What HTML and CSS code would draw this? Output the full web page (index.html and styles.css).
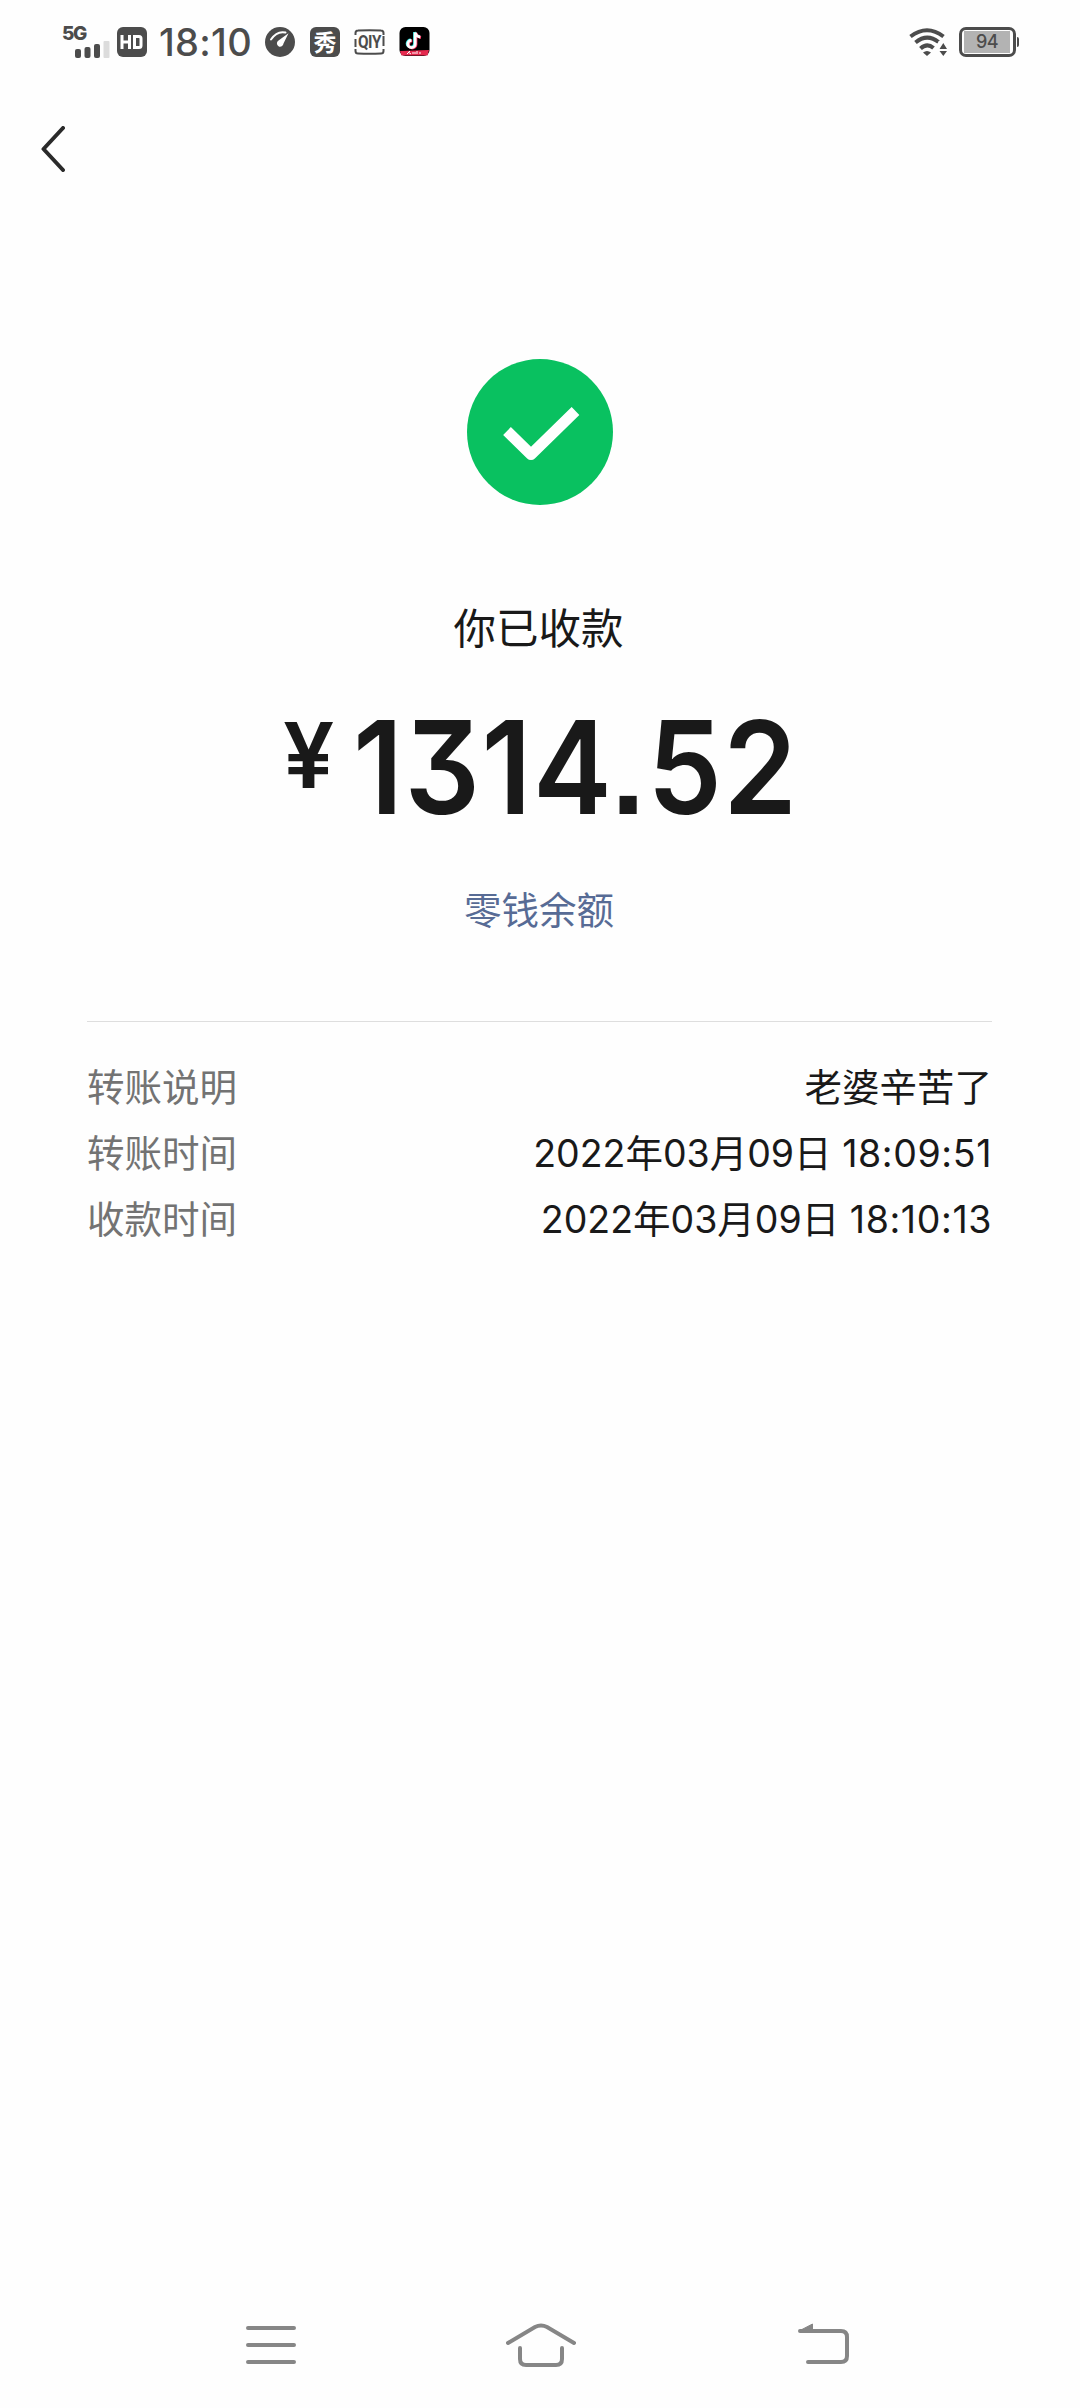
FILE: index.html
```html
<!DOCTYPE html>
<html lang="zh-CN">
<head>
<meta charset="utf-8">
<title>你已收款</title>
<link rel="stylesheet" href="styles.css">
</head>
<body>
<div class="screen">
  <header class="status">
    <div class="status-left">
      <div class="signal">
        <span class="network">5G</span>
        <svg class="bars" width="36" height="17" viewBox="0 0 36 17"><g fill="#4c4c4c"><rect x="0" y="8" width="6" height="9" rx="2"/><rect x="9.5" y="6" width="6" height="11" rx="2"/><rect x="19" y="3" width="6" height="14" rx="2"/></g><rect x="28.500" y="0" width="6" height="17" rx="1" fill="#dcdcdc"/></svg>
      </div>
      <svg class="hd" width="30" height="30" viewBox="0 0 30 30"><rect width="30" height="30" rx="6" fill="#4c4c4c"/><path d="M5 8v14M12.500 8v14M5 15h7.500M17.500 9.500h4.500q2 0 2 2v7q0 2-2 2h-4.500z" fill="none" stroke="#fff" stroke-width="3"/></svg>
      <span class="clock">18:10</span>
      <svg class="gauge" width="30" height="30" viewBox="0 0 30 30"><circle cx="15" cy="15" r="15" fill="#4c4c4c"/><path d="M6 12.500Q12 3.500 20.500 5.500" fill="none" stroke="#fff" stroke-width="2" stroke-linecap="round"/><path d="M23.500 6.200L18.500 16.500A3.300 3.300 0 1 1 13.500 13.500Z" fill="#fff"/></svg>
      <span class="show">秀</span>
      <span class="iqiyi"><svg width="31" height="26" viewBox="0 0 31 26"><path d="M1.500 6V4Q1.500 1.500 4 1.500Q15.500.8 27 1.500Q29.500 1.500 29.500 4V6M1.500 20v2Q1.500 24.500 4 24.500Q15.500 25.200 27 24.500Q29.500 24.500 29.500 22V20M1.500 10v8M29.500 7v10" fill="none" stroke="#4c4c4c" stroke-width="2"/></svg><b>QIY</b></span>
      <svg class="tiktok" width="31" height="30" viewBox="0 0 31 30"><rect x=".5" width="30" height="29" rx="6" fill="#000"/><g fill="none" stroke-width="2.800"><path d="M15.500 5v11.500a3.700 3.700 0 1 1-3.700-3.700M15.500 5q1 4 5 4.500" stroke="#35e8e4"/><path d="M17 6v11.500a3.700 3.700 0 1 1-3.700-3.700M17 6q1 4 5 4.500" stroke="#f8315c"/><path d="M16.200 5.500V17a3.700 3.700 0 1 1-3.700-3.700M16.200 5.500q1 4 5 4.500" stroke="#fff"/></g><path d="M1 24l29-1-1.500 5.500H2.500z" fill="#e5294e"/><path d="M8 27l3-3M9 25l3 2M13 26h4M18 24v3M20 26h2" stroke="#fff" stroke-width="1"/></svg>
    </div>
    <div class="status-right">
      <svg class="wifi" width="38" height="28" viewBox="0 0 38 28"><g fill="none" stroke="#4c4c4c" stroke-width="4"><path d="M1.500 8.500Q18 -4 34.500 8.500"/><path d="M6.500 14.500Q18 5 29.500 14"/><path d="M11.500 20.500Q18 14.500 24.500 20"/></g><path d="M14 24.500Q18 21.500 22 24.500L18 28z" fill="#4c4c4c"/><path d="M29.500 22h10V13h-10z" fill="#fefefe"/><path d="M30.500 21l3.800-6 3.700 6zM30.500 23h7.500l-3.700 5z" fill="#4c4c4c"/></svg>
      <span class="battery"><span class="level">94</span></span>
      <span class="battery-tip"></span>
    </div>
  </header>

  <nav class="topbar">
    <svg width="24" height="46" viewBox="0 0 24 46"><path d="M22 2L2.500 23L22 44" fill="none" stroke="#2a2a2a" stroke-width="4" stroke-linecap="round" stroke-linejoin="round"/></svg>
  </nav>

  <main class="receipt">
    <svg class="check" width="146" height="146" viewBox="0 0 146 146"><circle cx="73" cy="73" r="73" fill="#09c160"/><path d="M40 72L64 95.500L108.500 52" fill="none" stroke="#fff" stroke-width="11" stroke-linejoin="round"/></svg>
    <h1 class="title">你已收款</h1>
    <div class="amount"><span class="yen">¥</span><span class="number">1314.52</span></div>
    <a class="balance">零钱余额</a>
    <dl class="details">
      <div class="row"><dt>转账说明</dt><dd>老婆辛苦了</dd></div>
      <div class="row"><dt>转账时间</dt><dd>2022年03月09日 <span class="time">18:09:51</span></dd></div>
      <div class="row"><dt>收款时间</dt><dd>2022年03月09日 <span class="time">18:10:13</span></dd></div>
    </dl>
  </main>

  <footer class="navbar">
    <svg width="50" height="40" viewBox="0 0 50 40"><path d="M2 3h46M2 20h46M2 37h46" stroke="#868686" stroke-width="4" stroke-linecap="round"/></svg>
    <svg class="home" width="70" height="44" viewBox="0 0 70 44"><path d="M2 20L29 4Q35 1 41 4L68 20M14 25V36Q14 42 20 42H50Q56 42 56 36V25" fill="none" stroke="#868686" stroke-width="4" stroke-linecap="round"/></svg>
    <svg class="back" width="51" height="44" viewBox="0 0 51 44"><path d="M10 39H43Q49 39 49 33V14Q49 8 43 8H2" fill="none" stroke="#868686" stroke-width="4" stroke-linecap="round"/><path d="M1 8L14.500 1V8z" fill="#868686" stroke="#868686" stroke-linejoin="round"/></svg>
  </footer>
</div>
</body>
</html>
```
FILE: styles.css
```css
* { box-sizing: border-box; }
body, h1, dl, dd { margin: 0; }
body {
  background: #fefefe;
  color: #191919;
  font-family: Inter, "Noto Sans CJK SC", sans-serif;
}
.screen {
  width: 1080px;
  height: 2408px;
  display: flex;
  flex-direction: column;
  overflow: hidden;
}
.screen svg { display: block; flex: none; }

.status {
  height: 84px;
  padding: 0 61px 0 62px;
  display: flex;
  justify-content: space-between;
  align-items: center;
  color: #4c4c4c;
}
.status-left, .status-right { display: flex; align-items: center; }
.signal { width: 48px; height: 32px; }
.network {
  display: block;
  height: 15px;
  line-height: 15px;
  font-size: 19px;
  font-weight: 800;
  letter-spacing: -1.500px;
}
.bars { margin-left: 13px; }
.hd { margin-left: 7px; }
.clock {
  width: 94px;
  margin-left: 12px;
  font-size: 38px;
  font-weight: 500;
  letter-spacing: .3px;
  white-space: nowrap;
}
.gauge { margin-left: 12px; }
.show {
  width: 30px;
  height: 30px;
  margin-left: 15px;
  border-radius: 6px;
  background: #4c4c4c;
  color: #fff;
  font: 700 23px/29px "Noto Sans CJK SC", sans-serif;
  text-align: center;
}
.iqiyi { position: relative; margin-left: 14px; }
.iqiyi b {
  position: absolute;
  inset: 0;
  font: 700 18px/26px Roboto, sans-serif;
  letter-spacing: -.5px;
  text-align: center;
  transform: scaleX(.85);
}
.tiktok { margin-left: 14px; }
.battery {
  width: 57px;
  height: 30px;
  margin-left: 12px;
  padding: 1px 2px;
  border: 3px solid #4c4c4c;
  border-radius: 7px;
}
.level {
  display: block;
  width: 46px;
  height: 22px;
  background: #b3b3b3;
  font-size: 18px;
  line-height: 22px;
  font-weight: 500;
  letter-spacing: -.5px;
  text-align: center;
}
.battery-tip {
  width: 2px;
  height: 10px;
  margin-left: 1px;
  border-radius: 0 2px 2px 0;
  background: #4c4c4c;
}

.topbar { height: 130px; padding: 42px 41px 0; }

.receipt {
  flex: 1;
  padding: 145px 88px 0 87px;
  display: flex;
  flex-direction: column;
  align-items: center;
}
.title {
  margin: 93px 2px 0 0;
  font-size: 42.500px;
  line-height: 62px;
  font-weight: 400;
}
.amount {
  display: flex;
  align-items: flex-start;
  align-self: flex-start;
  margin: 28px 0 0 196px;
  height: 159px;
}
.yen { width: 70px; font-size: 91px; line-height: 134px; font-weight: 600; }
.number {
  font-size: 129.500px;
  line-height: 158px;
  font-weight: 560;
  letter-spacing: 1.600px;
  font-feature-settings: "cv09", "ss07";
  transform: scaleX(.914);
  transform-origin: left;
}
.balance {
  margin: 37px 1px 0 0;
  color: #576b95;
  font-size: 37.500px;
  line-height: 54px;
}
.details {
  width: 100%;
  margin-top: 83px;
  padding-top: 33px;
  border-top: 1px solid #dedede;
}
.row {
  display: flex;
  justify-content: space-between;
  height: 66px;
  font-size: 37.500px;
  line-height: 66px;
  white-space: nowrap;
}
.row dt { color: #737373; }
.time { letter-spacing: .6px; }

.navbar {
  height: 126px;
  padding-left: 246px;
  display: flex;
  align-items: center;
}
.home { margin-left: 210px; }
.back { margin-left: 222px; }
```
